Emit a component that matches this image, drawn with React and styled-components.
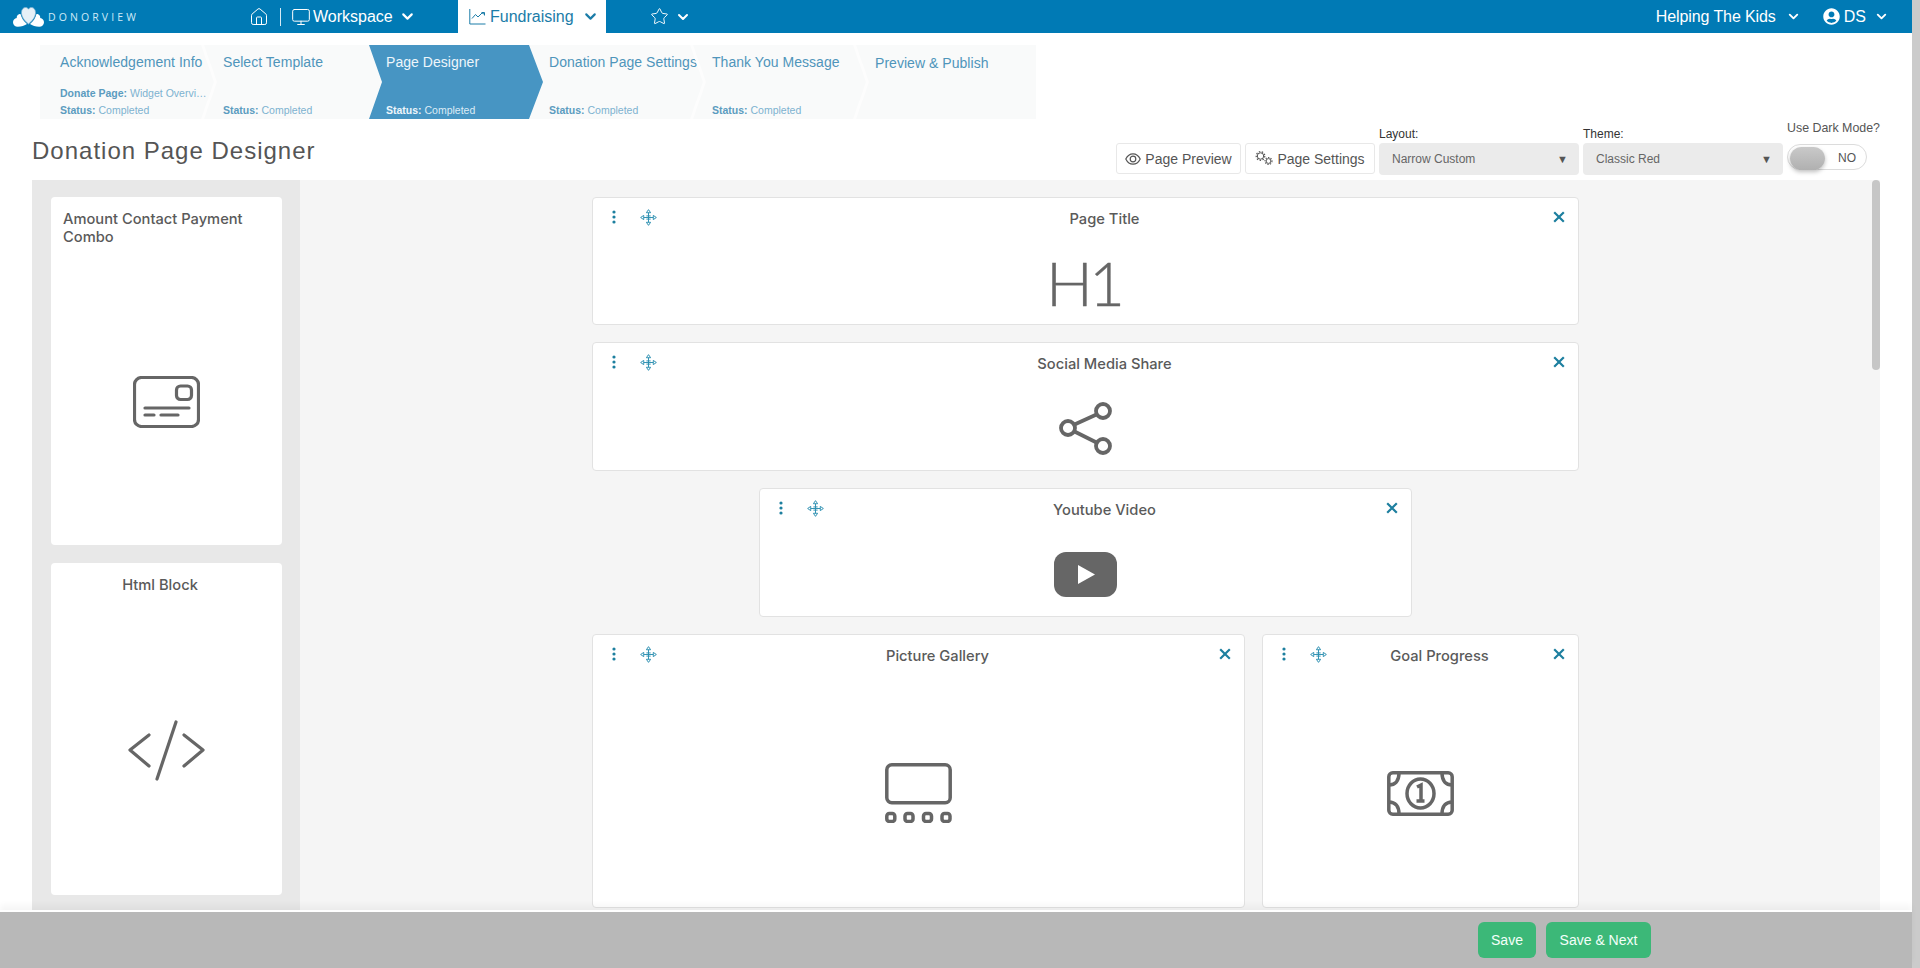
import React from 'react';
import styled, { createGlobalStyle } from 'styled-components';
import { ChevronDown, House, Monitor, Star } from 'lucide-react';
import { FaUserCircle } from 'react-icons/fa';

const Global = createGlobalStyle`
  html, body {
    margin: 0;
    padding: 0;
    height: 100%;
    overflow: hidden;
    background: #fff;
    font-family: "Liberation Sans", Arial, sans-serif;
  }
`;

const Shell = styled.div`
  display: flex;
  width: 1920px;
  height: 968px;
  overflow: hidden;
`;

const Page = styled.div`
  display: flex;
  flex-direction: column;
  width: 1912px;
  height: 968px;
`;

const WindowScroll = styled.div`
  width: 8px;
  background: #cbcbcb;
`;

const Nav = styled.nav`
  display: flex;
  align-items: center;
  height: 33px;
  flex-shrink: 0;
  padding-right: 23px;
  background: #007ab5;
  color: #fff;
  font-size: 16px;
`;

const Brand = styled.div`
  display: flex;
  align-items: center;
  gap: 4px;
  width: 236px;
  margin-left: 13px;
`;

const BrandName = styled.span`
  font-family: "Open Sans", sans-serif;
  font-size: 10.5px;
  letter-spacing: 3.1px;
  color: #cfeaf8;
`;

const NavItem = styled.div`
  display: flex;
  align-items: center;
  height: 33px;
  width: ${(p) => p.$width || 'auto'};
  padding-left: ${(p) => p.$pad || '0'};
  margin-left: ${(p) => p.$push || '0'};
  gap: ${(p) => p.$gap || '4px'};
  box-sizing: border-box;
  background: ${(p) => (p.$active ? '#fff' : 'transparent')};
  color: ${(p) => (p.$active ? '#1b7ca8' : '#fff')};
`;

const Divider = styled.span`
  width: 1px;
  height: 18px;
  margin: 0 10px 0 11px;
  background: #d5eaf5;
`;

const Stepper = styled.div`
  display: flex;
  flex-shrink: 0;
  width: 996px;
  height: 74px;
  margin: 12px 0 0 40px;
  background: #f9fafa;
`;

const Step = styled.div`
  position: relative;
  isolation: isolate;
  display: flex;
  flex-direction: column;
  box-sizing: border-box;
  width: 163px;
  padding: 9px 0 0 20px;
  color: ${(p) => (p.$active ? '#eef6fb' : '#4f95bb')};

  &::before {
    content: '';
    position: absolute;
    z-index: -1;
    top: 0;
    bottom: 0;
    left: 3px;
    right: -14px;
    background: #4795c3;
    clip-path: polygon(0 0, 160px 0, 100% 50%, 160px 100%, 0 100%, 13px 50%);
    display: ${(p) => (p.$active ? 'block' : 'none')};
  }

  &::after {
    content: '';
    position: absolute;
    top: 0;
    bottom: 0;
    right: -14px;
    width: 16px;
    background: #fdfdfd;
    clip-path: polygon(0 0, 3px 0, 16px 50%, 3px 100%, 0 100%, 13px 50%);
    display: ${(p) => (p.$plain ? 'none' : 'block')};
  }
`;

const StepName = styled.div`
  font-size: 14px;
  line-height: 17px;
  white-space: nowrap;
  letter-spacing: 0.04px;
  margin-top: ${(p) => (p.$low ? '1px' : '0')};
`;

const StepMeta = styled.div`
  font-size: 10.5px;
  line-height: 14px;
  white-space: nowrap;
  margin-top: ${(p) => (p.$auto ? 'auto' : '0')};
  margin-bottom: ${(p) => (p.$last ? '2px' : '3px')};
  color: ${(p) => (p.$active ? '#dcecf6' : '#7db2d0')};

  b {
    font-weight: 700;
    color: ${(p) => (p.$active ? '#eef6fb' : '#5c9cc0')};
  }
`;

const Header = styled.header`
  display: flex;
  align-items: flex-end;
  justify-content: space-between;
  flex-shrink: 0;
  box-sizing: border-box;
  height: 61px;
  padding: 0 32px 5px 32px;
`;

const Title = styled.h1`
  margin: 0 0 9px;
  font-size: 24px;
  line-height: 30px;
  font-weight: 400;
  letter-spacing: 1px;
  color: #555;
`;

const Toolbar = styled.div`
  display: flex;
  align-items: flex-end;
  gap: 4px;
`;

const ToolButton = styled.button`
  display: flex;
  align-items: center;
  justify-content: center;
  gap: ${(p) => p.$gap || '4px'};
  width: ${(p) => p.$width};
  height: 31px;
  margin-bottom: 1px;
  padding: 0;
  background: #fff;
  border: 1px solid #e8e8e8;
  border-radius: 3px;
  color: #555;
  font: 14px "Liberation Sans", Arial, sans-serif;
`;

const Field = styled.div`
  display: flex;
  flex-direction: column;
  gap: ${(p) => p.$gap || '2px'};
  width: ${(p) => p.$width || 'auto'};
`;

const FieldLabel = styled.label`
  font-size: ${(p) => p.$size || '12px'};
  line-height: 14px;
  color: ${(p) => p.$color || '#333'};
  white-space: nowrap;
`;

const Select = styled.div`
  display: flex;
  align-items: center;
  justify-content: space-between;
  box-sizing: border-box;
  width: 200px;
  height: 32px;
  padding: 0 11px 0 13px;
  background: #ebebeb;
  border-radius: 4px;
  color: #666;
  font-size: 12px;

  i {
    font-style: normal;
    font-size: 11px;
    color: #555;
  }
`;

const Toggle = styled.div`
  display: flex;
  align-items: center;
  justify-content: space-between;
  box-sizing: border-box;
  width: 80px;
  height: 26px;
  margin: 0 0 5px;
  padding: 2px 10px 0 2px;
  background: #fff;
  border: 1px solid #dcdcdc;
  border-radius: 13px;
  color: #555;
  font-size: 12px;
`;

const Knob = styled.span`
  width: 35px;
  height: 23px;
  margin-bottom: -1px;
  border-radius: 12px;
  background: linear-gradient(#c9c9c9, #b0b0b0);
  box-shadow: 0 2px 4px rgba(0, 0, 0, 0.25);
`;

const Canvas = styled.div`
  display: flex;
  flex-shrink: 0;
  width: 1848px;
  height: 730px;
  margin-left: 32px;
  overflow: hidden;
  background: #f5f5f5;
`;

const Palette = styled.aside`
  display: flex;
  flex-direction: column;
  gap: 18px;
  flex-shrink: 0;
  box-sizing: border-box;
  width: 268px;
  padding: 17px 18px 17px 19px;
  background: #e8e8e8;
`;

const PaletteCard = styled.div`
  display: flex;
  flex-direction: column;
  flex-shrink: 0;
  box-sizing: border-box;
  height: ${(p) => p.$height}px;
  padding: 13px 25px 0 12px;
  background: #fff;
  border-radius: 4px;
`;

const CardTitle = styled.div`
  font-family: Inter, sans-serif;
  font-size: 14.7px;
  font-weight: 500;
  line-height: 18px;
  color: #5a5a5a;
  text-align: ${(p) => p.$align || 'center'};
`;

const PaletteBody = styled.div`
  flex: 1;
  display: flex;
  align-items: center;
  justify-content: center;
  margin-right: -13px;
  padding-top: 12px;
`;

const Board = styled.main`
  flex: 1;
  display: flex;
  flex-direction: column;
  align-items: center;
  gap: 17px;
  padding: 17px 1px 0 0;
`;

const Row = styled.div`
  display: flex;
  flex-shrink: 0;
  justify-content: center;
  gap: 17px;
  width: 987px;
`;

const Widget = styled.section`
  display: flex;
  flex-direction: column;
  flex-shrink: 0;
  box-sizing: border-box;
  width: ${(p) => p.$width}px;
  height: ${(p) => p.$height}px;
  background: #fff;
  border: 1px solid #e2e2e2;
  border-radius: 4px;
`;

const WidgetHead = styled.div`
  display: flex;
  align-items: flex-start;
  box-sizing: border-box;
  height: 44px;
  flex-shrink: 0;
  padding: 11px 12px 0;
  color: #1d7f9f;
`;

const Tools = styled.div`
  display: flex;
  gap: 16px;
`;

const ToolIcon = styled.span`
  display: flex;
  align-items: center;
  justify-content: center;
  width: ${(p) => p.$width || '18px'};
  height: 16px;
`;

const WidgetTitle = styled(CardTitle)`
  flex: 1;
  margin-top: 1px;
`;

const WidgetBody = styled.div`
  flex: 1;
  display: flex;
  align-items: center;
  justify-content: center;
`;

const HeadingMark = styled.span`
  font-family: Lato, sans-serif;
  font-weight: 300;
  font-size: 62px;
  line-height: 62px;
  letter-spacing: -4px;
  margin: -3px 4px 0 0;
  color: #666;
  -webkit-text-stroke: 0.4px #666;
`;

const ScrollTrack = styled.div`
  flex-shrink: 0;
  width: 8px;
  background: #f5f5f5;
`;

const ScrollThumb = styled.div`
  height: 190px;
  border-radius: 4px;
  background: #c6c6c6;
`;

const Footer = styled.footer`
  position: relative;
  display: flex;
  justify-content: flex-end;
  gap: 10px;
  flex: 1;
  box-sizing: border-box;
  padding: 10px 261px 0 0;
  background: #b8b8b8;
  border-top: 2px solid #fff;
  box-shadow: 0 -5px 6px rgba(0, 0, 0, 0.04);
`;

const SaveButton = styled.button`
  width: ${(p) => p.$width}px;
  height: 36px;
  padding: 0;
  border: 0;
  border-radius: 6px;
  background: #3cb878;
  color: #f3fff9;
  font: 14px "Liberation Sans", Arial, sans-serif;
`;

const Logo = () => (
  <svg width="31" height="20" viewBox="0 0 31 20" fill="#fff">
    <path d="M7.500 7C4.500 7 3.500 9.500 3.800 11 1.500 11.500 0 13.300 0 15.300 0 17.800 2 19.800 4.800 19.800c3.500 0 7-1.500 9.200-2.800C10.500 14 8.500 11 7.500 7Z" />
    <path d="M23.500 7c3 0 4 2.500 3.700 4 2.300.5 3.800 2.300 3.800 4.300 0 2.500-2 4.500-4.800 4.500-3.500 0-7-1.500-9.200-2.800 3.500-3 5.500-6 6.500-10Z" />
    <path d="M15.500 17C10 12.500 8.500 8.500 8.500 5.500 8.500 2.500 10.300.5 12.500.5c1.300 0 2.400.6 3 1.700.6-1.100 1.700-1.700 3-1.700 2.200 0 4 2 4 5 0 3-1.500 7-7 11.500Z" fill="#e6f0f7" stroke="#7fb3d3" strokeWidth="0.7" />
  </svg>
);

const TrendIcon = () => (
  <svg width="17" height="17" viewBox="0 0 17 17" fill="none" stroke="currentColor" strokeWidth="1">
    <path d="M.8 1v15h15.700" />
    <path d="M3 10.500l3.500-4 2.500 2.500 4-4 2 1M12.500 4.500H15.500V7.500" />
  </svg>
);

const EyeIcon = () => (
  <svg width="16" height="14" viewBox="0 0 16 14" fill="none" stroke="#555" strokeWidth="1.200">
    <path d="M.8 7C2.500 3.500 5 1.800 8 1.800S13.500 3.500 15.200 7C13.500 10.500 11 12.200 8 12.200S2.500 10.500.8 7Z" />
    <circle cx="8" cy="7" r="2.800" />
  </svg>
);

const GearsIcon = () => (
  <svg width="19" height="15" viewBox="0 0 19 15" fill="none" stroke="#555">
    <circle cx="5.500" cy="5" r="3.200" strokeWidth="1" />
    <circle cx="5.500" cy="5" r="4.300" strokeWidth="1.200" strokeDasharray="1.500 1.500" />
    <circle cx="13.500" cy="10" r="2.400" strokeWidth="1" />
    <circle cx="13.500" cy="10" r="3.500" strokeWidth="1.100" strokeDasharray="1.300 1.300" />
  </svg>
);

const KebabIcon = () => (
  <svg width="4" height="14" viewBox="0 0 4 14" fill="currentColor">
    <circle cx="2" cy="2" r="1.600" />
    <circle cx="2" cy="7" r="1.600" />
    <circle cx="2" cy="12" r="1.600" />
  </svg>
);

const MoveIcon = () => (
  <svg width="17" height="17" viewBox="0 0 16 16" fill="none" stroke="#2b8fb0" strokeWidth="0.9">
    <path d="M8 3.500v9M3.500 8h9M6 6.500h4M6 9.500h4" />
    <path d="M8 .6l2 2.900H6ZM8 15.400l2-2.900H6ZM.6 8l2.900-2v4ZM15.400 8l-2.900-2v4Z" />
  </svg>
);

const CloseIcon = () => (
  <svg width="12" height="12" viewBox="0 0 12 12" fill="none" stroke="currentColor" strokeWidth="2.200">
    <path d="M1.200 1.200l9.600 9.600M10.800 1.200l-9.600 9.600" />
  </svg>
);

const CardIcon = () => (
  <svg width="67" height="52" viewBox="0 0 67 52" fill="none" stroke="#666" strokeWidth="3.200" strokeLinecap="round">
    <rect x="1.500" y="1.500" width="64" height="49" rx="7" />
    <rect x="43.500" y="10" width="15" height="13.500" rx="4" />
    <path d="M12 32h44M12 39h9M28 39h17" />
  </svg>
);

const CodeIcon = () => (
  <svg width="77" height="61" viewBox="0 0 77 61" fill="none" stroke="#666" strokeWidth="3.200" strokeLinecap="round" strokeLinejoin="round">
    <path d="M21 15 2 30l19 16M48 2 29 59M56 15l19 15-19 16" />
  </svg>
);

const ShareIcon = () => (
  <svg width="53" height="53" viewBox="0 0 53 53" fill="none" stroke="#666" strokeWidth="3.800">
    <circle cx="9" cy="26" r="7" />
    <circle cx="44" cy="9" r="7" />
    <circle cx="44" cy="44" r="7" />
    <path d="M15.500 22.500 37.500 12.500M15.500 29.500 37.500 40.500" />
  </svg>
);

const PlayIcon = () => (
  <svg width="63" height="45" viewBox="0 0 63 45">
    <rect width="63" height="45" rx="12" fill="#666" />
    <path d="M24 13 41 22.500 24 32Z" fill="#fff" />
  </svg>
);

const GalleryIcon = () => (
  <svg width="67" height="60" viewBox="0 0 67 60" fill="none" stroke="#666" strokeWidth="3.500">
    <rect x="1.800" y="1.800" width="63.400" height="38" rx="5" />
    <rect x="1.800" y="50.500" width="8" height="8" rx="2.500" />
    <rect x="20" y="50.500" width="8" height="8" rx="2.500" />
    <rect x="38.500" y="50.500" width="8" height="8" rx="2.500" />
    <rect x="57" y="50.500" width="8" height="8" rx="2.500" />
  </svg>
);

const MoneyIcon = () => (
  <svg width="67" height="45" viewBox="0 0 67 45" fill="none" stroke="#666" strokeWidth="3.500">
    <rect x="1.800" y="1.800" width="63.400" height="41.400" rx="4" />
    <ellipse cx="33.500" cy="22.500" rx="13.500" ry="14.500" />
    <path d="M2 14c6 0 10-4 10-12M65 14c-6 0-10-4-10-12M2 31c6 0 10 4 10 12M65 31c-6 0-10 4-10 12" />
    <path d="M30 16l4-2v16M29.500 30h8" />
  </svg>
);

const steps = [
  { name: 'Acknowledgement Info', extra: 'Widget Overvi…' },
  { name: 'Select Template' },
  { name: 'Page Designer', active: true },
  { name: 'Donation Page Settings' },
  { name: 'Thank You Message' },
  { name: 'Preview & Publish', bare: true },
];

const WidgetCard = ({ title, width, height, children }) => (
  <Widget $width={width} $height={height}>
    <WidgetHead>
      <Tools>
        <ToolIcon><KebabIcon /></ToolIcon>
        <ToolIcon><MoveIcon /></ToolIcon>
      </Tools>
      <WidgetTitle>{title}</WidgetTitle>
      <ToolIcon $width="14px"><CloseIcon /></ToolIcon>
    </WidgetHead>
    <WidgetBody>{children}</WidgetBody>
  </Widget>
);

const App = () => (
  <Shell>
    <Global />
    <Page>
      <Nav>
        <Brand>
          <Logo />
          <BrandName>DONORVIEW</BrandName>
        </Brand>
        <NavItem $width="209px" $gap="0">
          <House size={20} strokeWidth={1.2} />
          <Divider />
          <Monitor size={20} strokeWidth={1.2} style={{ marginRight: 2 }} />
          Workspace
          <ChevronDown size={17} strokeWidth={3} style={{ marginLeft: 6 }} />
        </NavItem>
        <NavItem $active $width="148px" $pad="11px" $gap="4px">
          <TrendIcon />
          Fundraising
          <ChevronDown size={17} strokeWidth={3} style={{ marginLeft: 4 }} />
        </NavItem>
        <NavItem $push="44px" $gap="6px">
          <Star size={19} strokeWidth={1.2} />
          <ChevronDown size={16} strokeWidth={3} />
        </NavItem>
        <NavItem $push="auto" $gap="10px" style={{ letterSpacing: '-0.1px' }}>
          Helping The Kids
          <ChevronDown size={15} strokeWidth={3} />
        </NavItem>
        <NavItem $push="22px" $gap="4px">
          <FaUserCircle size={17} />
          DS
          <ChevronDown size={15} strokeWidth={3} style={{ marginLeft: 4 }} />
        </NavItem>
      </Nav>

      <Stepper>
        {steps.map((step, i) => (
          <Step key={step.name} $active={step.active} $plain={step.active || step.bare || steps[i + 1]?.active}>
            <StepName $low={step.bare}>{step.name}</StepName>
            {step.extra && (
              <StepMeta $auto>
                <b>Donate Page:</b> {step.extra}
              </StepMeta>
            )}
            {!step.bare && (
              <StepMeta $auto={!step.extra} $last $active={step.active}>
                <b>Status:</b> Completed
              </StepMeta>
            )}
          </Step>
        ))}
      </Stepper>

      <Header>
        <Title>Donation Page Designer</Title>
        <Toolbar>
          <ToolButton $width="125px"><EyeIcon />Page Preview</ToolButton>
          <ToolButton $width="130px" $gap="3px"><GearsIcon />Page Settings</ToolButton>
          <Field>
            <FieldLabel>Layout:</FieldLabel>
            <Select>Narrow Custom<i>▼</i></Select>
          </Field>
          <Field>
            <FieldLabel>Theme:</FieldLabel>
            <Select>Classic Red<i>▼</i></Select>
          </Field>
          <Field $gap="9px" $width="93px">
            <FieldLabel $size="12.4px" $color="#555">Use Dark Mode?</FieldLabel>
            <Toggle><Knob />NO</Toggle>
          </Field>
        </Toolbar>
      </Header>

      <Canvas>
        <Palette>
          <PaletteCard $height={348}>
            <CardTitle $align="left">Amount Contact Payment Combo</CardTitle>
            <PaletteBody><CardIcon /></PaletteBody>
          </PaletteCard>
          <PaletteCard $height={332}>
            <CardTitle>Html Block</CardTitle>
            <PaletteBody><CodeIcon /></PaletteBody>
          </PaletteCard>
        </Palette>
        <Board>
          <Row>
            <WidgetCard title="Page Title" width={987} height={128}>
              <HeadingMark>H1</HeadingMark>
            </WidgetCard>
          </Row>
          <Row>
            <WidgetCard title="Social Media Share" width={987} height={129}>
              <ShareIcon />
            </WidgetCard>
          </Row>
          <Row>
            <WidgetCard title="Youtube Video" width={653} height={129}>
              <PlayIcon />
            </WidgetCard>
          </Row>
          <Row>
            <WidgetCard title="Picture Gallery" width={653} height={274}>
              <GalleryIcon />
            </WidgetCard>
            <WidgetCard title="Goal Progress" width={317} height={274}>
              <MoneyIcon />
            </WidgetCard>
          </Row>
        </Board>
        <ScrollTrack><ScrollThumb /></ScrollTrack>
      </Canvas>

      <Footer>
        <SaveButton $width={58}>Save</SaveButton>
        <SaveButton $width={105}>Save &amp; Next</SaveButton>
      </Footer>
    </Page>
    <WindowScroll />
  </Shell>
);

export default App;
